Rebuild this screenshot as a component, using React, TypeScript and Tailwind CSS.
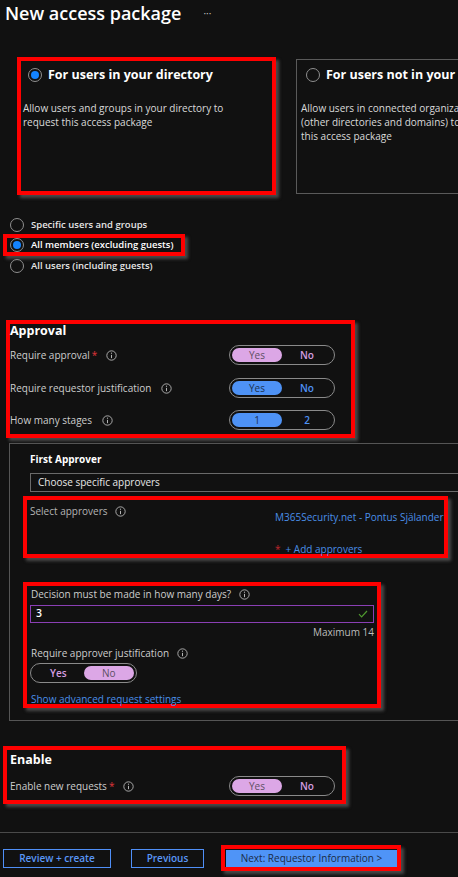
import React from "react";

// annotation frame drawn over the screenshot
const RED = "border-4 border-[#ff0000] shadow-[3px_3px_3px_#4a4a4a]";

function Info() {
  return (
    <svg width="11" height="11" viewBox="0 0 12 12" className="shrink-0">
      <circle cx="6" cy="6" r="5.1" fill="none" stroke="#b5b5b5" strokeWidth="1" />
      <line x1="6" y1="5.3" x2="6" y2="8.9" stroke="#b5b5b5" strokeWidth="1.1" />
      <circle cx="6" cy="3.5" r="0.65" fill="#b5b5b5" />
    </svg>
  );
}

function Radio({ checked = false }: { checked?: boolean }) {
  return (
    <span className="flex h-[14px] w-[14px] shrink-0 items-center justify-center rounded-full border border-[#8f8f8f]">
      {checked && <span className="h-[8px] w-[8px] rounded-full bg-[#1383ff]" />}
    </span>
  );
}

function Toggle({
  a,
  b,
  active,
  pink,
  width = "w-[106px]",
}: {
  a: string;
  b: string;
  active: 0 | 1;
  pink: boolean;
  width?: string;
}) {
  const fill = pink ? "bg-[#dca7e6] text-[#5d4f63]" : "bg-[#4e92f5] text-[#1c3150]";
  const idle = pink ? "text-[#d49ee0] font-semibold" : "text-[#4e92f5] font-semibold";
  return (
    <div className={`flex h-[20px] ${width} shrink-0 rounded-full border border-[#8a8a8a] p-[2px]`}>
      <span className={`flex flex-1 items-center justify-center rounded-full text-[10px] ${active === 0 ? fill : idle}`}>{a}</span>
      <span className={`flex flex-1 items-center justify-center rounded-full text-[10px] ${active === 1 ? fill : idle}`}>{b}</span>
    </div>
  );
}

function Label({ text, req = false, gap = "ml-[8px]" }: { text: string; req?: boolean; gap?: string }) {
  return (
    <div className="flex items-center whitespace-nowrap text-[10px] leading-[14px] text-[#cdcdcd]">
      <span>{text}</span>
      {req && <span className="ml-[2px] text-[#e0353b]">*</span>}
      <span className={gap}>
        <Info />
      </span>
    </div>
  );
}

export default function App() {
  return (
    <div className="h-[877px] w-[458px] overflow-hidden bg-[#111111] font-['Open_Sans',sans-serif] text-[#d4d4d4]">
      <div className="flex h-[26px] items-center pl-[5px]">
        <h1 className="text-[18px] font-semibold leading-[22px] text-white">New access package</h1>
        <span className="ml-[22px] text-[10px] text-[#c0c0c0]">···</span>
      </div>

      {/* policy scope cards */}
      <div className="mt-[31px] flex items-start gap-[20px] pl-[17px]">
        <div className={`h-[138px] w-[259px] shrink-0 pl-[2px] pt-[6px] ${RED}`}>
          <div className="ml-[5px] flex h-[16px] items-center gap-[6px]">
            <Radio checked />
            <span className="text-[12.5px] font-bold text-white">For users in your directory</span>
          </div>
          <p className="mt-[18px] text-[10px] leading-[14px] text-[#dadada]">
            Allow users and groups in your directory to
            <br />
            request this access package
          </p>
        </div>
        <div className="mt-[2px] h-[135px] w-[259px] shrink-0 border border-[#5a5a5a] pl-[4px] pt-[7px]">
          <div className="ml-[5px] flex h-[16px] items-center gap-[6px] whitespace-nowrap">
            <Radio />
            <span className="text-[12.5px] font-bold text-white">For users not in your directory</span>
          </div>
          <p className="mt-[18px] whitespace-nowrap text-[10px] leading-[14px] text-[#dadada]">
            Allow users in connected organizations
            <br />
            (other directories and domains) to request
            <br />
            this access package
          </p>
        </div>
      </div>

      {/* who can request */}
      <div className="mt-[20px] whitespace-nowrap text-[9.5px] font-semibold text-[#e6e6e6]">
        <div className="flex h-[20px] items-center gap-[7px] pl-[10px]">
          <Radio />
          <span>Specific users and groups</span>
        </div>
        <div className={`-mt-[1px] ml-[3px] flex h-[22px] w-[182px] items-center gap-[7px] pl-[3px] ${RED}`}>
          <Radio checked />
          <span className="text-white">All members (excluding guests)</span>
        </div>
        <div className="flex h-[20px] items-center gap-[7px] pl-[10px]">
          <Radio />
          <span>All users (including guests)</span>
        </div>
      </div>

      {/* approval */}
      <div className={`relative z-10 ml-[6px] mt-[44px] h-[118px] w-[349px] pr-[16px] ${RED}`}>
        <h2 className="text-[12.5px] font-bold leading-[14px] text-white">Approval</h2>
        <div className="mt-[7px] flex items-center justify-between">
          <Label text="Require approval" req gap="ml-[9px]" />
          <Toggle a="Yes" b="No" active={0} pink />
        </div>
        <div className="mt-[13px] flex items-center justify-between">
          <Label text="Require requestor justification" gap="ml-[10px]" />
          <Toggle a="Yes" b="No" active={0} pink={false} />
        </div>
        <div className="mt-[12px] flex items-center justify-between">
          <Label text="How many stages" gap="ml-[10px]" />
          <Toggle a="1" b="2" active={0} pink={false} />
        </div>
      </div>

      {/* first approver panel */}
      <div className="ml-[9px] mt-[5px] h-[278px] border-b border-l border-t border-[#555555] pl-[13px] pt-[8px]">
        <div className="ml-[7px] text-[10px] font-bold leading-[14px] text-white">First Approver</div>
        <div className="ml-[7px] mt-[7px] flex h-[19px] w-[440px] items-center border border-[#6a6a6a] pl-[7px] text-[10px] text-[#e8e8e8]">
          Choose specific approvers
        </div>

        <div className={`mt-[4px] flex h-[62px] w-[425px] pl-[3px] pt-[4px] ${RED}`}>
          <div className="w-[245px] shrink-0">
            <div className="flex items-center text-[10px] leading-[14px] text-[#b4b4b4]">
              <span>Select approvers</span>
              <span className="ml-[7px]">
                <Info />
              </span>
            </div>
          </div>
          <div className="whitespace-nowrap pt-[6px] text-[10px] leading-[14px]">
            <div className="text-[#4a8fe8]">M365Security.net - Pontus Själander</div>
            <div className="mt-[18px] flex items-start">
              <span className="text-[#c0262c]">*</span>
              <span className="ml-[5px] text-[#4a8fe8]">+ Add approvers</span>
            </div>
          </div>
        </div>

        <div className={`mt-[24px] h-[126px] w-[358px] pt-[1px] ${RED}`}>
          <div className="ml-[4px]">
            <Label text="Decision must be made in how many days?" gap="ml-[8px]" />
          </div>
          <div className="ml-[3px] mt-[4px] flex h-[18px] w-[344px] items-center justify-between border border-[#8a3fb4] pl-[5px] pr-[5px]">
            <span className="text-[10.5px] font-semibold text-white">3</span>
            <svg width="10" height="8" viewBox="0 0 10 8">
              <polyline points="1,4.2 3.6,6.8 9,1" fill="none" stroke="#4f9a2f" strokeWidth="1.2" />
            </svg>
          </div>
          <div className="ml-[3px] mt-[2px] w-[344px] text-right text-[10px] leading-[14px] text-[#bdbdbd]">Maximum 14</div>
          <div className="ml-[4px] mt-[7px]">
            <Label text="Require approver justification" gap="ml-[8px]" />
          </div>
          <div className="ml-[3px] mt-[3px]">
            <Toggle a="Yes" b="No" active={1} pink width="w-[107px]" />
          </div>
          <div className="ml-[4px] mt-[9px] text-[10px] leading-[14px] text-[#4a8fe8]">Show advanced request settings</div>
        </div>
      </div>

      {/* enable */}
      <div className={`ml-[3px] mt-[25px] h-[58px] w-[343px] pl-[3px] pr-[7px] pt-[3px] ${RED}`}>
        <h2 className="text-[12.5px] font-bold leading-[14px] text-white">Enable</h2>
        <div className="mt-[9px] flex items-center justify-between">
          <Label text="Enable new requests" req gap="ml-[9px]" />
          <Toggle a="Yes" b="No" active={0} pink />
        </div>
      </div>

      {/* footer */}
      <div className="mt-[28px] h-px w-full bg-[#4a4a4a]" />
      <div className="mt-[12px] flex h-[26px] items-center pl-[3px] text-[10px] font-semibold">
        <button className="flex h-[19px] w-[108px] items-center justify-center border border-[#4f8ff7] text-[#5a97f7]">
          Review + create
        </button>
        <button className="ml-[20px] flex h-[19px] w-[73px] items-center justify-center border border-[#4f8ff7] text-[#5a97f7]">
          Previous
        </button>
        <div className={`ml-[17px] flex h-[26px] w-[180px] items-center pl-[1px] ${RED}`}>
          <button className="flex h-[17px] w-[171px] items-center justify-center whitespace-nowrap bg-[#4f94f7] font-normal text-[#1b2c47]">
            Next: Requestor Information &gt;
          </button>
        </div>
      </div>
    </div>
  );
}
